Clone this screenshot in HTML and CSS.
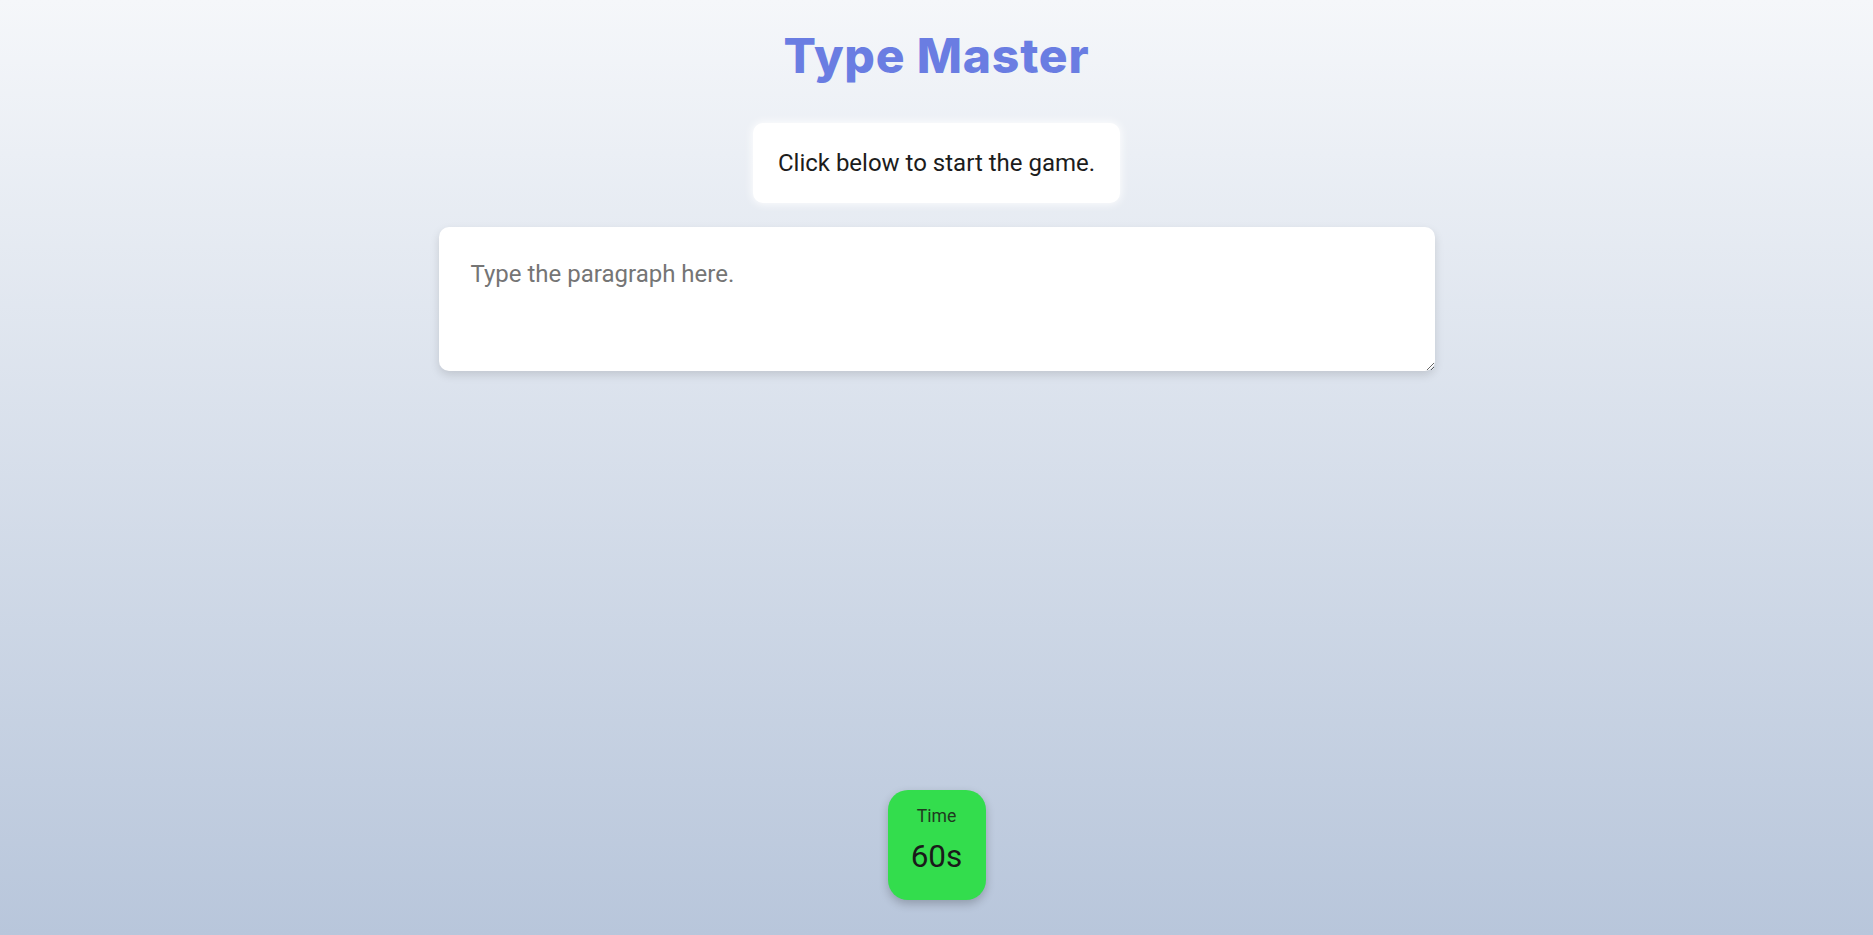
FILE: index.html
```html
<!DOCTYPE html>
<html lang="en">
<head>
<meta charset="utf-8">
<title>Type Master</title>
<link rel="stylesheet" href="styles.css">
</head>
<body>
<div class="page">
  <h1 class="title">Type Master</h1>
  <div class="message">Click below to start the game.</div>
  <textarea class="input" placeholder="Type the paragraph here."></textarea>
  <div class="timer">
    <div class="timer-label">Time</div>
    <div class="timer-value">60s</div>
  </div>
</div>
</body>
</html>
```
FILE: styles.css
```css
html, body {
  margin: 0;
  padding: 0;
  height: 100%;
}
body {
  background: linear-gradient(to bottom, #f5f7fa, #b8c6db);
  font-family: Roboto, "Liberation Sans", sans-serif;
  color: #1c1c1c;
}
.page {
  min-height: 100vh;
  box-sizing: border-box;
  display: flex;
  flex-direction: column;
  align-items: center;
  padding-top: 27px;
  padding-bottom: 35px;
}
.title {
  margin: 0;
  font-family: Inter, "Open Sans", sans-serif;
  font-weight: 800;
  font-size: 48px;
  line-height: 58px;
  color: #6a7de2;
  letter-spacing: 0.8px;
}
.message {
  margin-top: 38px;
  background: #fff;
  padding: 26px 25px;
  font-size: 24px;
  line-height: 28px;
  border-radius: 10px;
  box-shadow: 0 0 8px 1px rgba(255, 255, 255, 0.9);
  color: #1c1c1c;
}
.input {
  margin-top: 24px;
  width: 996px;
  height: 144px;
  box-sizing: border-box;
  border: none;
  border-radius: 10px;
  padding: 33px 27px 33px 32px;
  font-family: Roboto, "Liberation Sans", sans-serif;
  font-size: 24px;
  line-height: 28px;
  background: #fff;
  box-shadow: 0 4px 10px rgba(0, 0, 0, 0.13);
  outline: none;
  color: #1c1c1c;
}
.input::placeholder {
  color: #757575;
}
.timer {
  margin-top: auto;
  width: 98px;
  height: 110px;
  box-sizing: border-box;
  background: #33dd4d;
  border-radius: 20px;
  box-shadow: 0 4px 10px rgba(0, 0, 0, 0.22);
  display: flex;
  flex-direction: column;
  align-items: center;
  padding-top: 15px;
}
.timer-label {
  font-size: 17.6px;
  line-height: 22px;
  color: #1f3a1f;
}
.timer-value {
  margin-top: 12px;
  font-size: 31.5px;
  line-height: 36px;
  color: #1a1a1a;
}
```
